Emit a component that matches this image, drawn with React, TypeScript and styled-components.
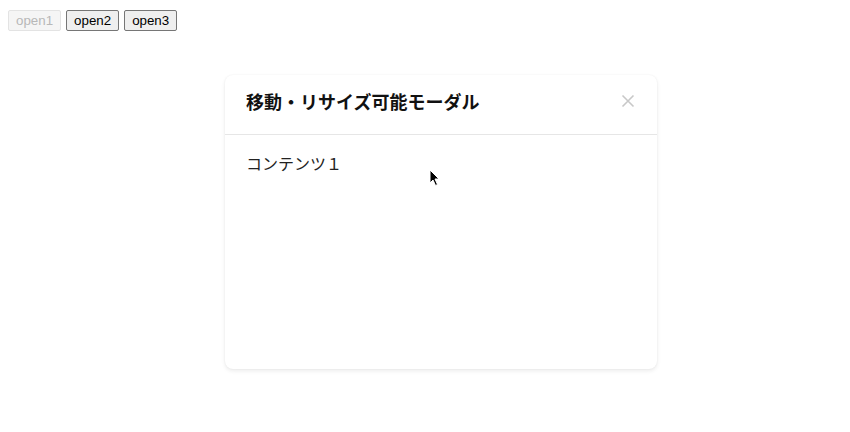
import React from "react";
import styled, { createGlobalStyle } from "styled-components";

const GlobalStyle = createGlobalStyle`
  html, body {
    margin: 0;
    background: #ffffff;
  }
  body {
    padding: 8px;
    font-family: "Liberation Sans", "Noto Sans CJK JP", sans-serif;
  }
`;

const Page = styled.div`
  position: relative;
  width: 834px;
  height: 416px;
`;

const Toolbar = styled.div`
  display: flex;
  gap: 5px;
  padding-top: 2px;
`;

const OpenButton = styled.button`
  font-family: "Liberation Sans", Arial, sans-serif;
  font-size: 13.33px;
  height: 21px;
  padding: 0 7px;
  border: 1px solid #767676;
  border-radius: 2px;
  background: #efefef;
  color: #000;
  line-height: 16px;

  &:disabled {
    border-color: #e3e3e3;
    background: #f5f5f5;
    color: #b8b8b8;
  }
`;

const Stage = styled.div`
  padding: 44px 0 0 217px;
`;

const Modal = styled.div`
  width: 432px;
  height: 294px;
  display: flex;
  flex-direction: column;
  background: #fff;
  border-radius: 8px;
  box-shadow: 0 2px 4px rgba(0, 0, 0, 0.08), 0 0 2px rgba(0, 0, 0, 0.06);
  font-family: "Noto Sans CJK JP", "Noto Sans", sans-serif;
`;

const Header = styled.div`
  display: flex;
  align-items: flex-start;
  justify-content: space-between;
  height: 60px;
  box-sizing: border-box;
  padding: 13px 22px 0 21px;
  border-bottom: 1px solid #e6e6e6;
`;

const Title = styled.h2`
  margin: 0;
  font-size: 18px;
  line-height: 26px;
  font-weight: 700;
  color: #111;
`;

const CloseButton = styled.button`
  border: none;
  background: none;
  padding: 0;
  margin-top: 6px;
  width: 14px;
  height: 14px;
  display: flex;
  cursor: pointer;
`;

const Body = styled.div`
  flex: 1;
  padding: 16px 21px;
  font-size: 16px;
  color: #222;
`;

const Pointer = styled.svg`
  position: absolute;
  left: 421px;
  top: 161px;
`;

export default function App() {
  return (
    <>
      <GlobalStyle />
      <Page>
        <Toolbar>
          <OpenButton disabled>open1</OpenButton>
          <OpenButton>open2</OpenButton>
          <OpenButton>open3</OpenButton>
        </Toolbar>
        <Stage>
          <Modal>
            <Header>
              <Title>移動・リサイズ可能モーダル</Title>
              <CloseButton aria-label="close">
                <svg width="14" height="14" viewBox="0 0 14 14">
                  <path d="M1.5 1.5L12.5 12.5M12.5 1.5L1.5 12.5" stroke="#c8c8c8" strokeWidth="1.6" />
                </svg>
              </CloseButton>
            </Header>
            <Body>コンテンツ１</Body>
          </Modal>
        </Stage>
        <Pointer width="12" height="18" viewBox="0 0 12 18">
          <path d="M1 1L1 14L4 11L6.5 16.5L8.5 15.5L6 10L10 10Z" fill="#000" stroke="#fff" strokeWidth="1" />
        </Pointer>
      </Page>
    </>
  );
}
